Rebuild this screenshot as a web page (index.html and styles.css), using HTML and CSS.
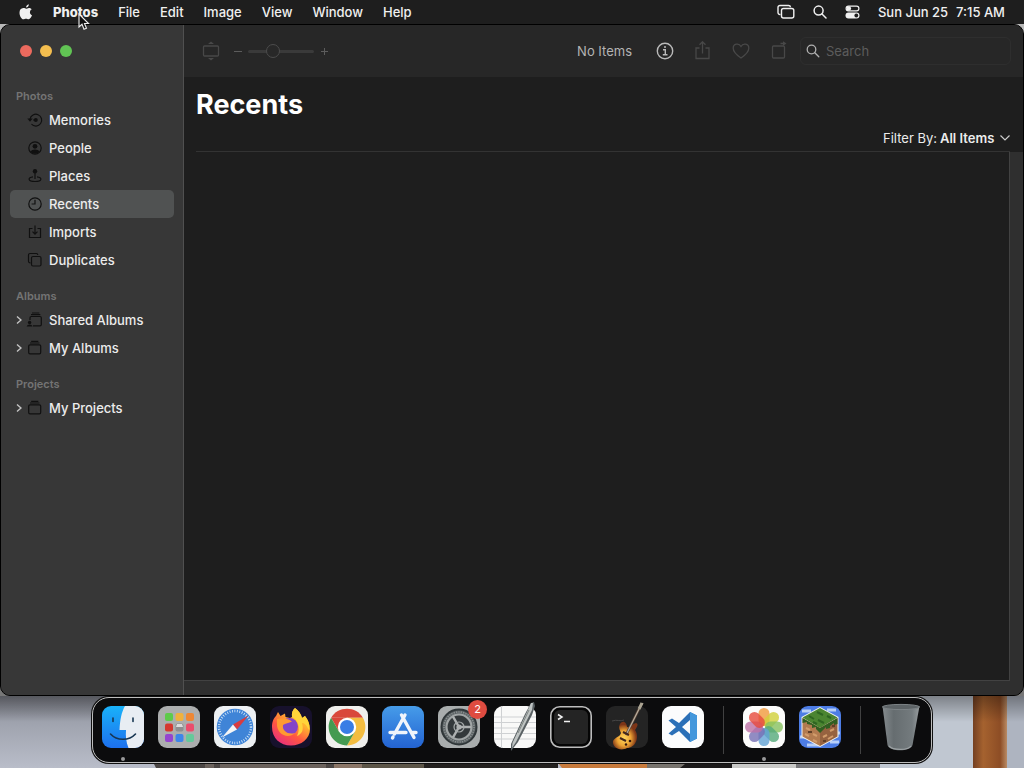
FILE: index.html
```html
<!DOCTYPE html>
<html lang="en">
<head>
<meta charset="utf-8">
<meta name="viewport" content="width=device-width, initial-scale=1">
<title>Photos</title>
<link rel="stylesheet" href="styles.css">
</head>
<body>
<div class="desktop">
  <svg class="wallpaper" viewBox="0 0 1024 72" preserveAspectRatio="none" aria-hidden="true">
    <defs>
      <linearGradient id="wall" x2="0" y2="1"><stop stop-color="#858791"/><stop offset=".35" stop-color="#9ea2ad"/><stop offset="1" stop-color="#b9bdc9"/></linearGradient>
      <linearGradient id="post"><stop stop-color="#744022"/><stop offset=".3" stop-color="#a5622f"/><stop offset=".8" stop-color="#8d4d25"/><stop offset="1" stop-color="#b98b65"/></linearGradient>
      <linearGradient id="shade" x2="0" y2="1"><stop stop-opacity=".35"/><stop offset="1" stop-opacity="0"/></linearGradient>
    </defs>
    <path fill="url(#wall)" d="M0 0H1024V72H0z"/>
    <path fill="#c0c7d1" d="M880 0H974V72H880z"/>
    <path fill="url(#post)" d="M973 0H1007V72H973z"/>
    <path fill="#aeb4c0" d="M1007 0H1024V72H1007z"/>
    <path fill="#4b4644" d="M152 64H336V72H156z"/>
    <path fill="#6b625c" d="M205 64H214V72H205zM220 64H326V72H220z"/>
    <path fill="#8a7566" d="M334 64H362V72H334z"/>
    <path fill="#5c5547" d="M362 64H424V72H362z"/>
    <path fill="#24211f" d="M424 64H558V72H424z"/>
    <path fill="#c77a3c" d="M556 64H647V72H562z"/>
    <path fill="#77736d" d="M647 64H690V72H647z"/>
    <path fill="#1c1a1a" d="M690 64H732V72H680z"/>
    <path fill="#c9c9c7" d="M732 64H796V72H732z"/>
    <path fill="#77777a" d="M796 64H880V72H796z"/>
    <path fill="url(#shade)" d="M0 0H1024V26H0z"/>
  </svg>

  <header class="menubar">
    <nav class="menus" aria-label="Menu bar">
      <button class="menu menu-apple" aria-label="Apple"><svg width="14" height="16" viewBox="0 0 14 16" fill="#f0f0f0"><path d="M9.800.2C8.200.4 7 1.900 7.100 3.600 8.700 3.600 10 1.900 9.800.2zM7.100 4.700C6.500 4.700 5.500 3.900 4.300 4 2 4.100.5 6 .5 8.700c0 3 2 6.600 3.900 6.600.9 0 1.400-.6 2.600-.6s1.600.6 2.600.6c1.500 0 2.900-2.500 3.400-4-2.700-1.200-2.700-4.900-.2-6.100C11.900 4.200 10.800 3.900 9.900 3.900c-1.200 0-2 .8-2.800.8z"/></svg></button>
      <button class="menu menu-app">Photos</button>
      <button class="menu">File</button>
      <button class="menu">Edit</button>
      <button class="menu">Image</button>
      <button class="menu">View</button>
      <button class="menu">Window</button>
      <button class="menu">Help</button>
    </nav>
    <div class="status">
      <button class="menu" aria-label="Windows"><svg width="18" height="16" viewBox="0 0 18 16" fill="none" stroke="#f0f0f0" stroke-width="1.400"><path d="M3.500 10.500H3A2 2 0 0 1 1 8.500V3.500A2 2 0 0 1 3 1.500H11.500A2 2 0 0 1 13.500 3.300"/><rect x="4.500" y="4.500" width="12.300" height="9.500" rx="2"/></svg></button>
      <button class="menu" aria-label="Spotlight"><svg width="14" height="14" viewBox="0 0 14 14" fill="none" stroke="#f0f0f0" stroke-width="1.500" stroke-linecap="round"><circle cx="5.600" cy="5.600" r="4.500"/><path d="M9 9L13 13"/></svg></button>
      <button class="menu" aria-label="Control Center"><svg width="15" height="14" viewBox="0 0 15 14"><rect x="1.100" y="1.100" width="12.800" height="4.800" rx="2.400" fill="none" stroke="#f0f0f0" stroke-width="1.200"/><circle cx="3.800" cy="3.500" r="2.300" fill="#f0f0f0"/><rect x=".5" y="7.500" width="14" height="6" rx="3" fill="#f0f0f0"/><circle cx="11.300" cy="10.500" r="1.900" fill="#1e1e1e"/></svg></button>
      <time class="clock" datetime="2023-06-25T07:15"><span>Sun Jun 25</span><span>7:15 AM</span></time>
    </div>
    <svg class="pointer" width="12" height="18" viewBox="0 0 12 18"><path d="M1 1V14L4 11.300 6 16.300 8.500 15.300 6.500 10.500H10.500z" fill="#111" stroke="#eee" stroke-width="1.100"/></svg>
  </header>

  <div class="window">
    <aside class="sidebar">
      <div class="lights">
        <button class="light light-close" aria-label="Close"></button>
        <button class="light light-min" aria-label="Minimize"></button>
        <button class="light light-zoom" aria-label="Zoom"></button>
      </div>
      <nav class="library" aria-label="Library">
        <section class="group">
          <h2 class="group-title">Photos</h2>
          <a class="item" href="#memories"><svg class="item-icon" viewBox="0 0 16 16"><path d="M3 7A5.900 5.900 0 1 1 4.500 12.200"/><path class="solid" d="M.3 6.500H5.700L3 9.800z"/><circle class="solid" cx="8.800" cy="8" r="2"/><path d="M6 8H8"/></svg>Memories</a>
          <a class="item" href="#people"><svg class="item-icon" viewBox="0 0 16 16"><circle cx="8" cy="8" r="6.200"/><circle class="solid" cx="8" cy="6.300" r="2.400"/><path class="solid" d="M3.400 11.500C5 8.700 11 8.700 12.600 11.500 10.500 14.500 5.500 14.500 3.400 11.500z"/></svg>People</a>
          <a class="item" href="#places"><svg class="item-icon" viewBox="0 0 16 16"><circle class="solid" cx="8" cy="3.200" r="2.200"/><path d="M8 5V11M6 8.800C.5 9.400.5 13.500 8 13.500S15.500 9.400 10 8.800"/></svg>Places</a>
          <a class="item item-current" href="#recents" aria-current="page"><svg class="item-icon" viewBox="0 0 16 16"><circle cx="8" cy="8" r="6.200"/><path d="M8 3.800V8H4.600"/></svg>Recents</a>
          <a class="item" href="#imports"><svg class="item-icon" viewBox="0 0 16 16"><path d="M5.500 4.500H2.500V13.500H13.500V4.500H10.500M8 1.500V10M5.500 7.700L8 10.200 10.500 7.700"/></svg>Imports</a>
          <a class="item" href="#duplicates"><svg class="item-icon" viewBox="0 0 16 16"><rect x="4.500" y="4.500" width="9.500" height="9.500" rx="1.500"/><path d="M3.500 10.800H3A1.500 1.500 0 0 1 1.500 9.300V3A1.500 1.500 0 0 1 3 1.500H9.300A1.500 1.500 0 0 1 10.800 3"/></svg>Duplicates</a>
        </section>
        <section class="group">
          <h2 class="group-title">Albums</h2>
          <a class="item item-tree" href="#shared-albums"><svg class="disclosure" viewBox="0 0 6 10"><path d="M1 1.500L5 5 1 8.500"/></svg><svg class="item-icon" viewBox="0 0 16 16"><path d="M3 8V5.800A1.300 1.300 0 0 1 4.300 4.500H13A1.300 1.300 0 0 1 14.300 5.800V12.500A1.300 1.300 0 0 1 13 13.800H6M4 2.700H13.300M5 1H12.300"/><circle class="solid" cx="2.600" cy="10.500" r="1.700"/><path class="solid" d="M-.3 14.500C.3 11.800 4.900 11.800 5.500 14.500z"/></svg>Shared Albums</a>
          <a class="item item-tree" href="#my-albums"><svg class="disclosure" viewBox="0 0 6 10"><path d="M1 1.500L5 5 1 8.500"/></svg><svg class="item-icon" viewBox="0 0 16 16"><rect x="1.700" y="4.800" width="12" height="9" rx="1.300"/><path d="M3 3H12.500M4.200 1.300H11.300"/></svg>My Albums</a>
        </section>
        <section class="group">
          <h2 class="group-title">Projects</h2>
          <a class="item item-tree" href="#my-projects"><svg class="disclosure" viewBox="0 0 6 10"><path d="M1 1.500L5 5 1 8.500"/></svg><svg class="item-icon" viewBox="0 0 16 16"><rect x="1.700" y="4.800" width="12" height="9" rx="1.300"/><path d="M3 3H12.500M4.200 1.300H11.300"/></svg>My Projects</a>
        </section>
      </nav>
    </aside>

    <main class="content">
      <div class="toolbar">
        <button class="tool" aria-label="Aspect"><svg width="18" height="20" viewBox="0 0 18 20" fill="none" stroke="#484848" stroke-width="1.300"><rect x="1.500" y="5" width="15" height="10" rx="1"/><path d="M6 3L9 .5 12 3zM6 17L9 19.500 12 17z" fill="#484848" stroke="none"/></svg></button>
        <div class="zoomer">
          <button class="tool" aria-label="Zoom out"><svg width="8" height="8" viewBox="0 0 8 8" stroke="#5c5c5c"><path d="M0 4.500H8"/></svg></button>
          <input class="slider" type="range" min="0" max="100" value="34" aria-label="Thumbnail size">
          <button class="tool" aria-label="Zoom in"><svg width="8" height="8" viewBox="0 0 8 8" stroke="#5c5c5c"><path d="M1 4.500H8M4.500 1V8"/></svg></button>
        </div>
        <span class="count">No Items</span>
        <div class="actions">
          <button class="tool" aria-label="Info"><svg width="18" height="18" viewBox="0 0 18 18" fill="none" stroke="#bababa" stroke-width="1.400"><circle cx="9" cy="9" r="7.700"/><path d="M7 7.700H9.300V12.500M6.800 12.700H11.500"/><circle cx="9" cy="5" r="1" fill="#bababa" stroke="none"/></svg></button>
          <button class="tool" aria-label="Share"><svg width="18" height="20" viewBox="0 0 18 20" fill="none" stroke="#484848" stroke-width="1.300"><path d="M5.500 7H2V17.500H15V7H11.500M8.500 12.500V.8M5.500 3.800L8.500.8 11.500 3.800"/></svg></button>
          <button class="tool" aria-label="Favorite"><svg width="18" height="18" viewBox="0 0 18 18" fill="none" stroke="#484848" stroke-width="1.300"><path d="M9 16C4 12.500 1.200 9.500 1.200 6.200 1.200 1.500 7 .8 9 4.500 11 .8 16.800 1.500 16.800 6.200 16.800 9.500 14 12.500 9 16z"/></svg></button>
          <button class="tool" aria-label="Rotate"><svg width="18" height="20" viewBox="0 0 18 20" fill="none" stroke="#484848" stroke-width="1.300"><rect x="2.500" y="5" width="12" height="12" rx="1"/><path d="M10.500 2.500H14"/><path d="M13 .3L16.500 2.500 13 4.700z" fill="#484848" stroke="none"/></svg></button>
        </div>
        <label class="search"><svg width="14" height="14" viewBox="0 0 14 14" fill="none" stroke="#b0b0b0" stroke-width="1.300" stroke-linecap="round"><circle cx="5.500" cy="5.500" r="4.300"/><path d="M8.800 8.800L12.800 12.800"/></svg><input class="search-input" type="search" placeholder="Search" aria-label="Search"></label>
      </div>
      <div class="heading">
        <h1 class="title">Recents</h1>
        <div class="filter">
          <label for="filter">Filter By:</label>
          <select class="filter-select" id="filter"><option>All Items</option></select>
          <svg class="chevron" width="10" height="6" viewBox="0 0 10 6"><path d="M.5.500L5 5 9.500.500" fill="none" stroke="#ccc" stroke-width="1.200"/></svg>
        </div>
      </div>
      <div class="viewport"><div class="grid-area"></div></div>
    </main>
  </div>

  <footer class="dock-area">
    <div class="dock">
      <button class="app app-running" aria-label="Finder"><svg viewBox="0 0 42 42"><defs><linearGradient id="fb" x2="0" y2="1"><stop stop-color="#19b2fa"/><stop offset="1" stop-color="#1d70ed"/></linearGradient><clipPath id="sq"><rect width="42" height="42" rx="9"/></clipPath></defs><g clip-path="url(#sq)"><path fill="url(#fb)" d="M0 0H42V42H0z"/><path fill="#e8edf3" d="M23 0C19.500 6 18 14 17.500 24H24C23.500 30 24 36 26.500 42H42V0z"/><path d="M11 12V15.500M31 12V15.500" stroke="#173652" stroke-width="1.600" stroke-linecap="round"/><path d="M8.500 28C15 35 27 35 33.500 28" fill="none" stroke="#173652" stroke-width="1.600" stroke-linecap="round"/></g></svg></button>
      <button class="app" aria-label="Launchpad"><svg viewBox="0 0 42 42"><rect width="42" height="42" rx="9" fill="#acaeae"/><g><rect x="7" y="7" width="8" height="8" rx="2" fill="#5ecb4b"/><rect x="17.500" y="7" width="8" height="8" rx="2" fill="#f0b13d"/><rect x="28" y="7" width="8" height="8" rx="2" fill="#ee8734"/><rect x="7" y="17.500" width="8" height="8" rx="2" fill="#d5382f"/><rect x="17.500" y="17.500" width="8" height="8" rx="2" fill="#8e8e90"/><path d="M19 18H24L25 21H18z" fill="#ddd"/><rect x="28" y="17.500" width="8" height="8" rx="2" fill="#eb4d6c"/><rect x="7" y="28" width="8" height="8" rx="2" fill="#9544cf"/><rect x="17.500" y="28" width="8" height="8" rx="2" fill="#3d86e9"/><rect x="28" y="28" width="8" height="8" rx="2" fill="#65c99a"/></g></svg></button>
      <button class="app" aria-label="Safari"><svg viewBox="0 0 42 42"><rect width="42" height="42" rx="9" fill="#edf0f2"/><circle cx="21" cy="21" r="18.300" fill="#3f84d7"/><circle cx="21" cy="21" r="16" fill="none" stroke="#d8eafa" stroke-width="2.500" stroke-dasharray=".8 1.680"/><path fill="#d93b3f" d="M34.500 9.500L23 23.500 19 18.500z"/><path fill="#f5f5f5" d="M8 31.500L19 18.500 23 23.500z"/></svg></button>
      <button class="app" aria-label="Firefox"><svg viewBox="0 0 42 42"><defs><linearGradient id="ff" x1=".9" x2=".2" y2="1"><stop stop-color="#ffe33d"/><stop offset=".35" stop-color="#ffb02f"/><stop offset=".65" stop-color="#ff5641"/><stop offset="1" stop-color="#e62c82"/></linearGradient></defs><rect width="42" height="42" rx="9" fill="#17112c"/><path fill="url(#ff)" d="M25 2C29 5 31 8 32 12L35 10C38 14 40 18 40 23 40 33 31 39.500 21 39.500 10 39.500 2 32 2 21 2 15 4 12 6 10L8 6 10.500 10 15 7.500 15.500 11 20 12 22 11C21.500 7 22.500 4 25 2z"/><circle cx="19.500" cy="20.500" r="8.500" fill="#8344c8"/><path fill="#ff9a31" d="M7 13C13 11 19 13 22 15.500 19 17 15 17.500 13 19 12 25 18 29 25 27 18 34 6 28 7 17z"/><path fill="#ffd43a" d="M25 2C29 5 31 8 32 12L35 10C38 14 40 18 39 24 36 19 35 17 32 17 34 24 32 28 27 30 31 22 28 14 22 11 21.500 7 22.500 4 25 2z"/></svg></button>
      <button class="app" aria-label="Chrome"><svg viewBox="0 0 42 42"><rect width="42" height="42" rx="9" fill="#efefec"/><g transform="translate(21 21)"><path fill="#d9483b" d="M-15.900-9.200A18.400 18.400 0 0 1 15.900-9.200H0z"/><path fill="#d9483b" d="M-15.900-9.200L-8 4.600 0 0V-9.200z"/><path fill="#f4bd40" d="M15.900-9.200A18.400 18.400 0 0 1 0 18.400L8 4.600 0 0V-9.200z"/><path fill="#459a51" d="M0 18.400A18.400 18.400 0 0 1-15.900-9.200L-8 4.600 0 0 8 4.600z"/><circle r="9.200" fill="#fff"/><circle r="7" fill="#397de5"/></g></svg></button>
      <button class="app" aria-label="App Store"><svg viewBox="0 0 42 42"><defs><linearGradient id="as" x2="0" y2="1"><stop stop-color="#469ce9"/><stop offset="1" stop-color="#2363d2"/></linearGradient></defs><rect width="42" height="42" rx="9" fill="url(#as)"/><path d="M23 9L12.500 28M19.500 9L32 31.500M8 26.500H24M30 26.500H34M11 31L10.500 32" stroke="#f0f5fb" stroke-width="3.400" stroke-linecap="round"/></svg></button>
      <button class="app" aria-label="System Settings, 2 updates"><svg viewBox="0 0 42 42"><rect width="42" height="42" rx="9" fill="#a9adad"/><circle cx="21" cy="21" r="17.500" fill="#5a6163" stroke="#303739" stroke-width="2"/><circle cx="21" cy="21" r="15" fill="none" stroke="#8c9292" stroke-width="1.600" stroke-dasharray="1.200 1.200"/><circle cx="21" cy="21" r="12.500" fill="#33393b" stroke="#a0a5a5" stroke-width="2.200"/><path d="M21 21H33M21 21L15 10.600M21 21L15 31.400" stroke="#adb1b1" stroke-width="2.400"/><circle cx="21" cy="21" r="5" fill="none" stroke="#a4a9a9" stroke-width="1.200"/><circle cx="21" cy="21" r="2.600" fill="#adb1b1"/></svg><span class="badge">2</span></button>
      <button class="app" aria-label="TextEdit"><svg viewBox="0 0 42 42"><rect width="42" height="42" rx="9" fill="#f9f9f8"/><path d="M0 11H42M0 16.500H42M0 22H42M0 27.500H42M0 33H42M7.500 0V42" stroke="#cfd1d3" stroke-width="1"/><path fill="#596063" d="M37-3L40-4 41 0 38 9 24 36 17 45 17 38 31 8z"/><path fill="#bfc4c3" d="M37-3L39-3 38 4 22 36 18 42 18.500 37 33 6z"/><path d="M35 4L24 27" stroke="#808785"/></svg></button>
      <button class="app" aria-label="Terminal"><svg viewBox="0 0 42 42"><rect x=".8" y=".8" width="40.400" height="40.400" rx="9" fill="#050505" stroke="#bdbdbd" stroke-width="1.600"/><rect x="4" y="4" width="34" height="34" rx="6" fill="#242424"/><path d="M8 8.500L12 11 8 13.500M14 15.500H20" fill="none" stroke="#f2f2f2" stroke-width="1.500"/></svg></button>
      <button class="app" aria-label="GarageBand"><svg viewBox="0 0 42 42"><defs><radialGradient id="gb" cx=".45" cy=".6"><stop stop-color="#ffd95e"/><stop offset=".55" stop-color="#eda334"/><stop offset="1" stop-color="#7d3517"/></radialGradient></defs><rect width="42" height="42" rx="9" fill="#242424"/><path d="M6 15C11 13 14 16 18 14" stroke="#454545" fill="none"/><path fill="url(#gb)" d="M14 18C17 13 21 17 21 21 24 22 26 18 30 17 33 18 31 21 29 24 34 32 29 42 21 42 14 46 6 41 7 35 9 31 14 31 15 27 14 24 12 21 14 18z"/><path d="M20 29L33 3" stroke="#5a4437" stroke-width="2.600"/><path d="M20 29L33 3 37-3" stroke="#b8b0a0" stroke-width="1.200" fill="none"/><path d="M33 3L36-3" stroke="#aaa391" stroke-width="3"/><path d="M17 26L23 29M14 32L20 35" stroke="#43261c" stroke-width="2"/><circle cx="24" cy="35" r="1.300" fill="#35190f"/><circle cx="20" cy="38.500" r="1.200" fill="#35190f"/></svg></button>
      <button class="app" aria-label="Visual Studio Code"><svg viewBox="0 0 42 42"><rect width="42" height="42" rx="9" fill="#fbfcfd"/><path fill="#2b70b8" d="M28 6L35 9.500V32.500L28 36 17 25 10 29.500 6.500 27.500 14 21 6.500 14.500 10 12.500 17 17zM28 14L20 21 28 28z"/><path fill="#4397dc" d="M28 6L35 9.500V32.500L28 36z"/></svg></button>
      <span class="divider"></span>
      <button class="app app-running" aria-label="Photos"><svg viewBox="0 0 42 42"><rect width="42" height="42" rx="9" fill="#fcfcfb"/><g class="petals" transform="translate(21 21)"><rect x="-5.500" y="-19" width="11" height="18" rx="5.500" fill="#f09a3c"/><rect x="-5.500" y="-19" width="11" height="18" rx="5.500" fill="#cfd03a" transform="rotate(45)"/><rect x="-5.500" y="-19" width="11" height="18" rx="5.500" fill="#86c05f" transform="rotate(90)"/><rect x="-5.500" y="-19" width="11" height="18" rx="5.500" fill="#54a97a" transform="rotate(135)"/><rect x="-5.500" y="-19" width="11" height="18" rx="5.500" fill="#62a3d6" transform="rotate(180)"/><rect x="-5.500" y="-19" width="11" height="18" rx="5.500" fill="#766fb5" transform="rotate(225)"/><rect x="-5.500" y="-19" width="11" height="18" rx="5.500" fill="#bd72a8" transform="rotate(270)"/><rect x="-5.500" y="-19" width="11" height="18" rx="5.500" fill="#e64a3c" transform="rotate(315)"/></g></svg></button>
      <button class="app" aria-label="Minecraft"><svg viewBox="0 0 42 42"><rect width="42" height="42" rx="9" fill="#4d7de5"/><path d="M3 5H12M28 4H37M1 31H10M31 36H40M8 39H20M35 27H41" stroke="#b8cff7" stroke-width="3"/><path fill="#f4f4ee" d="M21 1L39.500 11V31L21 41 2.500 31V11z"/><path fill="#4b8531" d="M21 2L38.500 11.500 21 22 3.500 11.500z"/><path fill="#b27b50" d="M3.500 12L21 22V40L3.500 30.500z"/><path fill="#966240" d="M38.500 12L21 22V40L38.500 30.500z"/><path fill="#315f22" d="M3.500 12L21 22 38.500 12V18L35 19V17L31 20V22L27 23V21L21 27 17 23V21L13 22V19L8 18V16L3.500 17z"/><path d="M10 10L15 13M18 6L24 9M19 14L25 17M28 10L32 12M14 16L18 18" stroke="#2e6521" stroke-width="2"/><path d="M7 22L11 24M14 28L18 30M6 28L10 30M24 31L28 29M31 25L35 23M29 33L34 30M14 34L18 36" stroke="#d29c6b" stroke-width="2"/><path d="M9 26H13M24 35H27M33 20H36" stroke="#624028" stroke-width="2"/></svg></button>
      <span class="divider"></span>
      <button class="app" aria-label="Trash"><svg viewBox="0 0 42 42"><defs><linearGradient id="tr"><stop stop-color="#858b8e"/><stop offset=".3" stop-color="#666d70"/><stop offset=".8" stop-color="#747b7e"/><stop offset="1" stop-color="#989d9f"/></linearGradient></defs><path fill="url(#tr)" d="M2.500 0L7.500 39C9 46 31 46 32.500 39L39.500 0z"/><ellipse cx="21" cy="1" rx="18.500" ry="2.600" fill="#5d6366" stroke="#7d8386"/><path d="M9 40C13 44.500 28 44.500 31 40" stroke="#9ca2a4" fill="none" stroke-width="1.200"/></svg></button>
    </div>
  </footer>
</div>
</body>
</html>
```

FILE: styles.css
```css
* { box-sizing: border-box; }
body {
  margin: 0;
  background: #000;
  color: #ececec;
  font: 13px/16px Inter, "Liberation Sans", sans-serif;
}
button, input, select { font: inherit; color: inherit; margin: 0; padding: 0; border: 0; background: none; }
svg { display: block; flex: none; }
a { color: inherit; text-decoration: none; }
h1, h2 { margin: 0; }

.desktop {
  position: relative;
  display: grid;
  grid-template-rows: auto 1fr auto;
  min-height: 100vh;
  background: linear-gradient(#b8b8b8 50%, #777 90%);
}
.wallpaper { position: absolute; left: 0; bottom: 0; width: 100%; height: 72px; }

.menubar {
  position: relative;
  display: flex;
  justify-content: space-between;
  align-items: center;
  height: 24px;
  padding: 0 19px;
  background: #1e1e1e;
  color: #f0f0f0;
  font-weight: 500;
}
.menus, .status { display: flex; align-items: center; }
.menus { gap: 20px; }
.status { gap: 18px; }
.menu-app { font-weight: 800; }
.clock { display: flex; gap: 8px; }
.pointer { position: absolute; left: 78px; top: 13px; z-index: 3; }

.window {
  position: relative;
  display: flex;
  border: 1px solid #000;
  border-radius: 10px;
  overflow: hidden;
  background: #323232;
}
.sidebar {
  flex: none;
  width: 183px;
  padding: 0 9px;
  border-right: 1px solid #505050;
  background: #373737;
}
.lights { display: flex; gap: 8px; padding: 20px 10px 31px; }
.light { width: 12px; height: 12px; border-radius: 50%; }
.light-close { background: #ec6a5e; }
.light-min { background: #f4be4f; }
.light-zoom { background: #61c454; }
.library { display: flex; flex-direction: column; gap: 14px; }
.group-title { padding: 0 6px 2px; color: #747474; font-size: 11px; line-height: 16px; font-weight: 600; }
.item {
  display: flex;
  align-items: center;
  gap: 6px;
  height: 28px;
  padding-left: 17px;
  border-radius: 5px;
  font-weight: 500;
}
.item-current { background: #505252; }
.item-tree { padding-left: 6px; gap: 5px; }
.item-icon { width: 16px; height: 16px; fill: none; stroke: #101010; stroke-width: 1.2; overflow: visible; }
.item-icon .solid { fill: #101010; stroke: none; }
.item-tree .item-icon { margin-right: 1px; }
.disclosure { width: 6px; height: 10px; fill: none; stroke: #c4c4c4; stroke-width: 1.4; }

.content { flex: 1; min-width: 0; display: flex; flex-direction: column; background: #1e1e1e; }
.toolbar {
  display: flex;
  align-items: center;
  height: 52px;
  padding: 0 12px 0 18px;
  background: #272727;
}
.zoomer { display: flex; align-items: center; gap: 6px; margin-left: 14px; }
.slider { appearance: none; width: 66px; height: 16px; }
.slider::-webkit-slider-runnable-track { height: 3px; border-radius: 2px; background: #3a3a3a; }
.slider::-webkit-slider-thumb {
  appearance: none;
  width: 14px;
  height: 14px;
  margin-top: -6px;
  border: 1px solid #4c4c4c;
  border-radius: 50%;
  background: #282828;
}
.count { margin-left: auto; color: #b4b4b4; }
.actions { display: flex; align-items: center; gap: 20px; margin: 0 12px 0 24px; }
.search {
  display: flex;
  align-items: center;
  gap: 6px;
  width: 211px;
  height: 28px;
  padding: 0 5px;
  border: 1px solid #2e2e2e;
  border-radius: 6px;
}
.search-input { flex: 1; min-width: 0; outline: 0; }
.search-input::placeholder { color: #5c5c5c; }

.heading { margin: 0 13px 0 12px; border-bottom: 1px solid #333; }
.title { padding-top: 12px; color: #fff; font-size: 27px; line-height: 32px; font-weight: 700; }
.filter {
  display: flex;
  justify-content: flex-end;
  align-items: center;
  gap: 3px;
  padding: 9px 0 5px;
}
.filter-select { appearance: none; font-weight: 600; }
.chevron { margin-left: 2px; }
.viewport { flex: 1; display: flex; padding: 0 13px 14px 0; background: #2f2f2f; }
.grid-area { flex: 1; background: #1e1e1e; border: solid #424242; border-width: 0 1px 1px 0; }

.dock-area { position: relative; display: flex; justify-content: center; padding: 1px 0 5px; }
.dock {
  display: flex;
  align-items: center;
  gap: 14px;
  height: 66px;
  padding: 0 9px;
  border: 1px solid #bdbdbd;
  border-radius: 17px;
  background: #0c0c0d;
  box-shadow: 0 0 0 1px #111;
}
.app { position: relative; width: 42px; height: 42px; margin-bottom: 6px; }
.app svg { width: 42px; height: 42px; overflow: visible; }
.petals rect { opacity: .8; }
.app-running::after {
  content: "";
  position: absolute;
  left: 19px;
  bottom: -13px;
  width: 4px;
  height: 4px;
  border-radius: 50%;
  background: #9a9a9a;
}
.badge {
  position: absolute;
  top: -6px;
  right: -7px;
  width: 19px;
  height: 19px;
  border-radius: 50%;
  background: #de4b40;
  color: #fff;
  font-size: 11px;
  line-height: 19px;
}
.divider { width: 1px; height: 48px; margin: 0 5px; background: #414141; }
```
